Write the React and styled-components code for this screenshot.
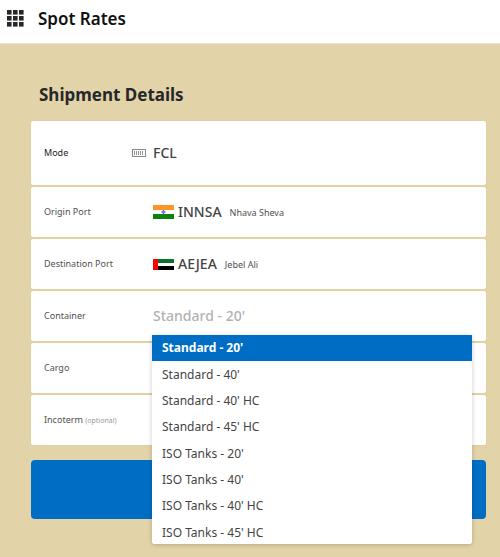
import { useState } from "react";
import styled, { createGlobalStyle } from "styled-components";

const GlobalStyle = createGlobalStyle`
    * {
        box-sizing: border-box;
    }
    body {
        margin: 0;
        font-family: "Noto Sans", sans-serif;
        color: #444;
        background-color: #e2d3a8;
    }
`;

const Page = styled.div`
    min-height: 100vh;
`;

const Header = styled.header`
    display: flex;
    align-items: center;
    gap: 14px;
    height: 44px;
    padding: 0 7px 6px;
    background-color: white;
    border-bottom: 1px solid #ece4cb;
`;

const MenuButton = styled.button`
    display: flex;
    padding: 0;
    border: none;
    background: none;
    color: #25282b;
    cursor: pointer;
`;

const PageTitle = styled.h1`
    margin: 0;
    font-size: 17px;
    line-height: 24px;
    font-weight: 600;
    color: #111;
`;

const Main = styled.main`
    padding: 39px 14px 14px 31px;
`;

const SectionTitle = styled.h2`
    margin: 0 0 14px;
    padding-left: 8px;
    font-size: 17px;
    line-height: 24px;
    font-weight: 700;
    color: #25282b;
`;

const Form = styled.form`
    display: flex;
    flex-direction: column;
    gap: 15px;
`;

const Fields = styled.div`
    display: flex;
    flex-direction: column;
    gap: 2px;
`;

const Row = styled.div`
    display: grid;
    grid-template-columns: 88px 20px 1fr;
    align-items: center;
    height: ${(props) => (props.$tall ? "64px" : "50px")};
    padding: 0 14px 0 13px;
    background-color: white;
    border-radius: 2px;
    box-shadow: 0 0 1px #e0b96a;
`;

const Label = styled.label`
    font-size: 9px;
    line-height: 14px;
    white-space: nowrap;
    color: ${(props) => (props.$dark ? "#222" : "#505050")};
`;

const Optional = styled.span`
    font-size: 7px;
    color: #999;
`;

const IconCell = styled.span`
    display: flex;
`;

const Value = styled.div`
    position: relative;
    display: flex;
    align-items: center;
    gap: 4px;
    height: 100%;
    padding-left: 1px;
`;

const Code = styled.output`
    font-size: 14px;
    line-height: 20px;
    font-weight: 500;
    color: #444;
`;

const PortName = styled.span`
    padding: 2px 0 0 4px;
    font-size: 9px;
    line-height: 14px;
    color: #505050;
`;

const Input = styled.input`
    width: 100%;
    padding: 0;
    border: none;
    outline: none;
    background: none;
    font-family: inherit;
    font-size: 14px;
    line-height: 20px;
    font-weight: 500;
    color: #444;
    &::placeholder {
        color: #b2b2b2;
        opacity: 1;
    }
`;

const Menu = styled.ul`
    position: absolute;
    z-index: 1;
    top: calc(100% - 6px);
    left: 0;
    right: 0;
    height: 209px;
    margin: 0;
    padding: 0;
    overflow: hidden;
    list-style: none;
    background-color: white;
    border-radius: 0 0 3px 3px;
    box-shadow: 0 1px 5px rgba(0, 0, 0, 0.2);
`;

const Options = styled.div`
    display: grid;
    grid-template-rows: repeat(8, 1fr);
    height: 211px;
`;

const Option = styled.li`
    display: flex;
    align-items: center;
    padding: 0 10px;
    font-size: 12px;
    line-height: 20px;
    font-weight: ${(props) => (props.$active ? 700 : 400)};
    color: ${(props) => (props.$active ? "white" : "#444")};
    background-color: ${(props) => (props.$active ? "#006dc4" : "white")};
    cursor: pointer;
`;

const SubmitButton = styled.button`
    height: 59px;
    border: none;
    border-radius: 4px;
    background-color: #006dc4;
    cursor: pointer;
`;

const containers = [
    "Standard - 20'",
    "Standard - 40'",
    "Standard - 40' HC",
    "Standard - 45' HC",
    "ISO Tanks - 20'",
    "ISO Tanks - 40'",
    "ISO Tanks - 40' HC",
    "ISO Tanks - 45' HC",
];

const GridIcon = () => (
    <svg width="17" height="17" viewBox="0 0 17 17" fill="currentColor">
        {[0, 6, 12].map((y) =>
            [0, 6, 12].map((x) => (
                <rect key={`${x}-${y}`} x={x} y={y} width="4.6" height="4.6" />
            ))
        )}
    </svg>
);

const ContainerIcon = () => (
    <svg width="14" height="8" viewBox="0 0 14 8" fill="none" stroke="#888">
        <rect x="0.5" y="0.5" width="13" height="7" />
        <path d="M2.5 2v4M4.5 2v4M6.5 2v4M8.5 2v4M10.5 2v4" strokeWidth="0.9" />
    </svg>
);

const IndiaFlag = () => (
    <svg width="21" height="14" viewBox="0 0 21 14">
        <rect width="21" height="14" fill="white" />
        <rect width="21" height="5" fill="#ff9526" />
        <rect y="9" width="21" height="5" fill="#0d820d" />
        <circle cx="10.5" cy="7" r="1.4" fill="#b9b9ee" stroke="#7676d6" strokeWidth="0.7" />
        <path d="M10.5 4.8v4.4M8.3 7h4.4" stroke="#5b5bc8" strokeWidth="0.7" />
    </svg>
);

const UaeFlag = () => (
    <svg width="21" height="11" viewBox="0 0 21 11">
        <rect width="21" height="11" fill="white" />
        <rect width="21" height="4" fill="#0b7328" />
        <rect y="7" width="21" height="4" fill="#000" />
        <rect width="5" height="11" fill="#f00" />
    </svg>
);

const App = () => {
    const [open, setOpen] = useState(true);
    const [container, setContainer] = useState("");
    const active = container || containers[0];

    const select = (name) => {
        setContainer(name);
        setOpen(false);
    };

    return (
        <Page>
            <GlobalStyle />
            <Header>
                <MenuButton type="button" aria-label="Menu">
                    <GridIcon />
                </MenuButton>
                <PageTitle>Spot Rates</PageTitle>
            </Header>
            <Main>
                <SectionTitle>Shipment Details</SectionTitle>
                <Form onSubmit={(e) => e.preventDefault()}>
                    <Fields>
                        <Row $tall>
                            <Label $dark htmlFor="mode">Mode</Label>
                            <IconCell><ContainerIcon /></IconCell>
                            <Value>
                                <Code id="mode">FCL</Code>
                            </Value>
                        </Row>
                        <Row>
                            <Label htmlFor="origin">Origin Port</Label>
                            <IconCell />
                            <Value>
                                <IndiaFlag />
                                <Code id="origin">INNSA</Code>
                                <PortName>Nhava Sheva</PortName>
                            </Value>
                        </Row>
                        <Row>
                            <Label htmlFor="destination">Destination Port</Label>
                            <IconCell />
                            <Value>
                                <UaeFlag />
                                <Code id="destination">AEJEA</Code>
                                <PortName>Jebel Ali</PortName>
                            </Value>
                        </Row>
                        <Row>
                            <Label htmlFor="container">Container</Label>
                            <IconCell />
                            <Value>
                                <Input
                                    id="container"
                                    role="combobox"
                                    aria-expanded={open}
                                    aria-controls="container-list"
                                    placeholder="Standard - 20'"
                                    value={container}
                                    readOnly
                                    onClick={() => setOpen(!open)}
                                />
                                {open && (
                                    <Menu id="container-list" role="listbox" aria-label="Container">
                                        <Options role="presentation">
                                            {containers.map((name) => (
                                                <Option
                                                    key={name}
                                                    role="option"
                                                    aria-selected={name === active}
                                                    $active={name === active}
                                                    onClick={() => select(name)}
                                                >
                                                    {name}
                                                </Option>
                                            ))}
                                        </Options>
                                    </Menu>
                                )}
                            </Value>
                        </Row>
                        <Row>
                            <Label htmlFor="cargo">Cargo</Label>
                            <IconCell />
                            <Value>
                                <Input id="cargo" />
                            </Value>
                        </Row>
                        <Row>
                            <Label htmlFor="incoterm">
                                Incoterm <Optional>(optional)</Optional>
                            </Label>
                            <IconCell />
                            <Value>
                                <Input id="incoterm" />
                            </Value>
                        </Row>
                    </Fields>
                    <SubmitButton type="submit" aria-label="Search rates" />
                </Form>
            </Main>
        </Page>
    );
};

export default App;
